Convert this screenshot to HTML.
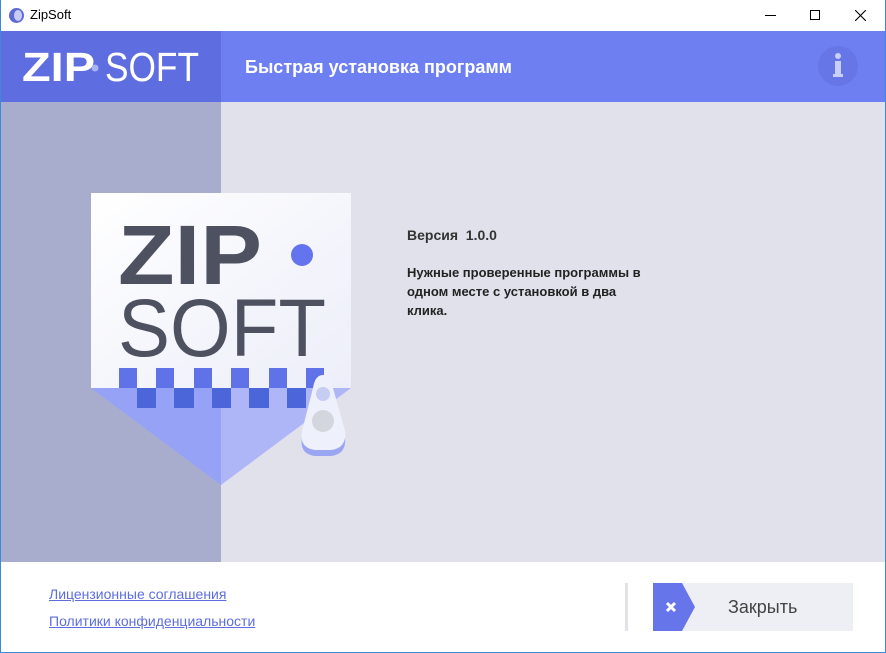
<!DOCTYPE html>
<html><head><meta charset="utf-8"><style>
*{margin:0;padding:0;box-sizing:border-box}
body{width:886px;height:653px;overflow:hidden;background:#fff;font-family:"Liberation Sans","DejaVu Sans",sans-serif;position:relative}
.abs{position:absolute}
</style></head><body>
<div class="abs" style="left:0;top:0;width:886px;height:653px;border:1px solid #3a8ad8;border-top:none"></div>
<div class="abs" style="left:1px;top:0;width:884px;height:31px;background:#fff"></div>
<div class="abs" style="left:9px;top:8px;width:15px;height:15px;border-radius:50%;background:#5d6ad6"></div>
<div class="abs" style="left:14px;top:10px;width:8px;height:11px;border-radius:50%;background:#c7cdf5"></div>
<div class="abs" style="left:30px;top:7px;font-size:13px;color:#000">ZipSoft</div>
<div class="abs" style="left:765px;top:15px;width:11px;height:1px;background:#000"></div>
<div class="abs" style="left:810px;top:10px;width:10px;height:10px;border:1px solid #000"></div>
<svg class="abs" style="left:855px;top:10px" width="11" height="11"><path d="M0 0L11 11M11 0L0 11" stroke="#000" stroke-width="1.1"/></svg>
<div class="abs" style="left:1px;top:31px;width:220px;height:71px;background:#5e6de0"></div>
<div class="abs" style="left:221px;top:31px;width:664px;height:71px;background:#6e7ff2"></div>
<svg class="abs" style="left:0;top:31px" width="221" height="71">
<text x="22" y="50" font-family="'Liberation Sans',sans-serif" font-weight="bold" font-size="41" fill="#fff" textLength="73" lengthAdjust="spacingAndGlyphs">ZIP</text>
<circle cx="95" cy="37" r="3.5" fill="#a9b3f3"/>
<text x="105" y="50" font-family="'Liberation Sans',sans-serif" font-size="41" fill="#fff" textLength="94" lengthAdjust="spacingAndGlyphs">SOFT</text>
</svg>
<div class="abs" style="left:245px;top:57px;font-size:18px;font-weight:bold;color:#fff">Быстрая установка программ</div>
<div class="abs" style="left:818px;top:46px;width:40px;height:40px;border-radius:50%;background:#6676e6"></div>
<div class="abs" style="left:835px;top:53px;width:6px;height:6px;border-radius:50%;background:#c8d0fa"></div>
<div class="abs" style="left:835px;top:61px;width:6px;height:16px;background:#c8d0fa"></div>
<div class="abs" style="left:833px;top:74px;width:10px;height:3px;background:#c8d0fa"></div>
<div class="abs" style="left:1px;top:102px;width:220px;height:460px;background:#a9adcd"></div>
<div class="abs" style="left:221px;top:102px;width:664px;height:460px;background:#e1e1eb"></div>
<svg class="abs" style="left:91px;top:193px" width="260" height="295">
<defs><linearGradient id="g" x1="0" y1="0" x2="1" y2="1"><stop offset="0" stop-color="#fff"/><stop offset="1" stop-color="#eceef9"/></linearGradient></defs>
<polygon points="0,195 130,292 130,195" fill="#96a2f6"/>
<polygon points="130,195 130,292 260,195" fill="#aeb6f8"/>
<rect x="0" y="0" width="260" height="195" fill="url(#g)"/>
<g fill="#5f72e8"><rect x="28" y="175" width="18" height="20"/><rect x="65" y="175" width="18" height="20"/><rect x="103" y="175" width="18" height="20"/><rect x="140" y="175" width="18" height="20"/><rect x="178" y="175" width="18" height="20"/><rect x="215" y="175" width="18" height="20"/></g>
<g fill="#4a66d8"><rect x="46" y="195" width="19" height="20"/><rect x="83" y="195" width="20" height="20"/><rect x="121" y="195" width="19" height="20"/><rect x="158" y="195" width="20" height="20"/><rect x="196" y="195" width="19" height="20"/></g>
<path d="M222 195 Q224 182 232 182 Q240 182 242 195 L254 238 Q256 255 240 257 L224 257 Q208 255 211 238 Z" fill="#9ba6f2" transform="translate(0,6)"/>
<path d="M222 195 Q224 182 232 182 Q240 182 242 195 L254 238 Q256 255 240 257 L224 257 Q208 255 211 238 Z" fill="#eef0fb"/>
<circle cx="232" cy="201" r="7" fill="#c6cdf2"/>
<circle cx="232" cy="228" r="11" fill="#d4d6de"/>
<text x="27" y="91" font-family="'Liberation Sans',sans-serif" font-weight="bold" font-size="84" fill="#4e5160" textLength="144" lengthAdjust="spacingAndGlyphs">ZIP</text>
<circle cx="211" cy="62" r="11" fill="#6374ee"/>
<text x="27" y="163" font-family="'Liberation Sans',sans-serif" font-size="82" fill="#4e5160" textLength="208" lengthAdjust="spacingAndGlyphs">SOFT</text>
</svg>
<div class="abs" style="left:407px;top:227px;font-size:14px;font-weight:bold;color:#333">Версия&nbsp; 1.0.0</div>
<div class="abs" style="left:407px;top:263px;font-size:13px;font-weight:bold;color:#222;line-height:19px;width:250px">Нужные проверенные программы в одном месте с установкой в два клика.</div>
<div class="abs" style="left:49px;top:586px;font-size:14px;color:#5d6ddf;text-decoration:underline">Лицензионные соглашения</div>
<div class="abs" style="left:49px;top:613px;font-size:14px;color:#5d6ddf;text-decoration:underline">Политики конфиденциальности</div>
<div class="abs" style="left:625px;top:583px;width:3px;height:48px;background:#e2e2ea"></div>
<div class="abs" style="left:653px;top:583px;width:200px;height:48px;background:#eeeef5"></div>
<svg class="abs" style="left:653px;top:583px" width="42" height="48"><polygon points="0,0 29,0 42,24 29,48 0,48" fill="#6676ea"/><path d="M14 20L22 28M22 20L14 28" stroke="#fff" stroke-width="3"/></svg>
<div class="abs" style="left:728px;top:597px;font-size:18px;color:#444">Закрыть</div>
</body></html>
